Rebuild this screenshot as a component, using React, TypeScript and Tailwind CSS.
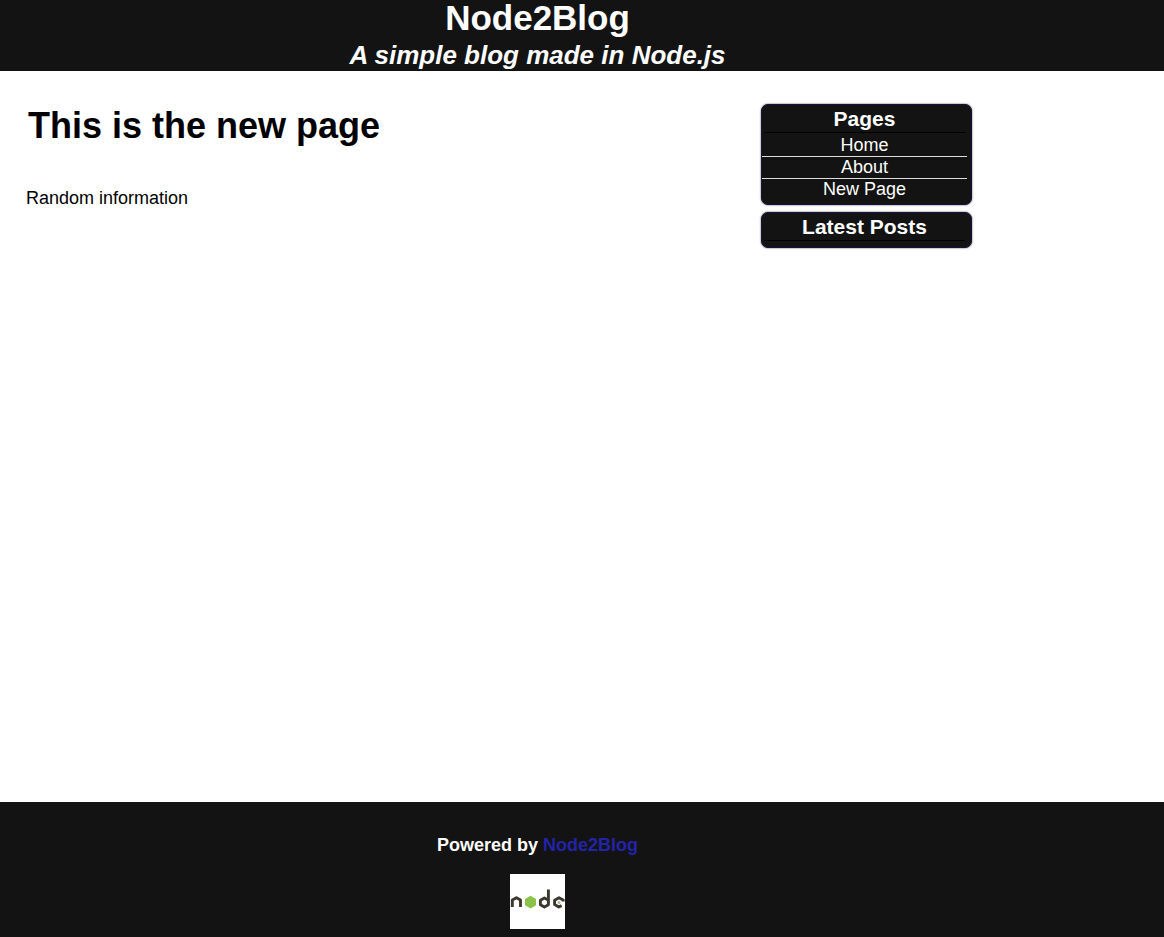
const pages = ["Home", "About", "New Page"];
const latestPosts: string[] = [];

function Panel({ title, links }: { title: string; links: string[] }) {
  return (
    <section className="rounded-[7px] border border-[#14113a] bg-[#131313] pt-[2px] pr-1 pb-1 text-center text-white shadow-[0_0_2px_#444]">
      <h3 className="mx-[2px] border-b border-black pb-px text-[21px] leading-6 font-bold">{title}</h3>
      <ul className="divide-y divide-[#ddd] pt-[2px]">
        {links.map((link) => (
          <li key={link}>
            <a href="#" className="block">{link}</a>
          </li>
        ))}
      </ul>
    </section>
  );
}

function NodeLogo() {
  return (
    <svg viewBox="0 0 55 55" className="h-[55px] w-[55px] bg-white" role="img" aria-label="node">
      <g fill="none" stroke="#3b382f" strokeWidth="2.9" strokeLinejoin="round">
        <path d="M2.3 33V26l4.1-2.3 4.1 2.3v7" />
        <path d="M38.4 15.6v15.2l-4 2.3-4-2.3v-4.6l4-2.3 4 2.3" />
        <path d="M53.2 27.6v-1.6l-4.2-2.2-4.4 2.4v4.4l4.2 2.4 2.8-1.4" />
      </g>
      <path d="M20.5 21.8l5.5 3.1v6.4l-5.5 3.1-5.5-3.1v-6.4z" fill="#8bc34a" />
      <circle cx="49" cy="28.4" r="1.5" fill="#b9b7a6" />
    </svg>
  );
}

export default function App() {
  return (
    <div className="flex min-h-screen flex-col bg-white font-['Liberation_Sans',Arial,sans-serif] text-[18px] leading-[21px] text-black">
      <header className="bg-[#131313] text-white">
        <div className="w-full max-w-[1075px] pb-px text-center font-bold">
          <h1 className="pb-[5px] text-[35px] leading-[35px]">Node2Blog</h1>
          <h2 className="text-[26px] leading-[30px] italic">A simple blog made in Node.js</h2>
        </div>
      </header>
      <div className="flex w-full max-w-[972px] grow items-start justify-between gap-8 pt-[33px] pl-[26px]">
        <main>
          <h1 className="px-[2px] pt-[2px] text-[36px] leading-10 font-bold">This is the new page</h1>
          <p className="pt-[42px]">Random information</p>
        </main>
        <aside className="flex w-[211px] shrink-0 flex-col gap-[7px]">
          <Panel title="Pages" links={pages} />
          <Panel title="Latest Posts" links={latestPosts} />
        </aside>
      </div>
      <footer className="bg-[#131313] text-white">
        <div className="flex w-full max-w-[1075px] flex-col items-center gap-[18px] pt-[33px] pb-2">
          <p className="font-bold">
            Powered by <a href="#" className="text-[#2323a8]">Node2Blog</a>
          </p>
          <NodeLogo />
        </div>
      </footer>
    </div>
  );
}
